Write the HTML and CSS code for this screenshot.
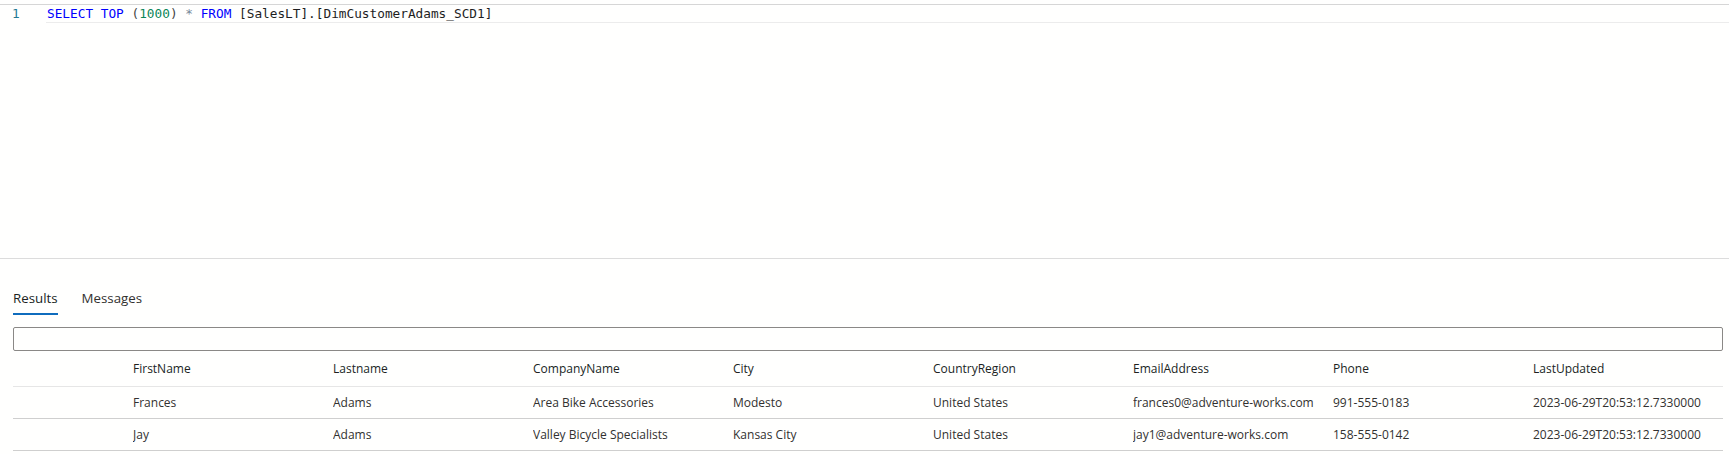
FILE: index.html
```html
<!DOCTYPE html>
<html lang="en">
<head>
<meta charset="utf-8">
<title>Query</title>
<link rel="stylesheet" href="styles.css">
</head>
<body>
<div class="editor">
  <div class="editor-inner">
    <div class="code-line">
      <div class="gutter">1</div>
      <div class="line-content"><span class="kw">SELECT</span> <span class="kw">TOP</span> <span class="delim">(</span><span class="num">1000</span><span class="delim">)</span> <span class="op">*</span> <span class="kw">FROM</span> <span class="ident">[SalesLT].[DimCustomerAdams_SCD1]</span></div>
    </div>
  </div>
</div>
<div class="results">
  <div class="tabs">
    <div class="tab active">Results</div>
    <div class="tab">Messages</div>
  </div>
  <div class="filter"></div>
  <div class="grid">
    <div class="row header">
      <div class="cell"></div>
      <div class="cell">FirstName</div>
      <div class="cell">Lastname</div>
      <div class="cell">CompanyName</div>
      <div class="cell">City</div>
      <div class="cell">CountryRegion</div>
      <div class="cell">EmailAddress</div>
      <div class="cell">Phone</div>
      <div class="cell">LastUpdated</div>
    </div>
    <div class="row">
      <div class="cell"></div>
      <div class="cell">Frances</div>
      <div class="cell">Adams</div>
      <div class="cell">Area Bike Accessories</div>
      <div class="cell">Modesto</div>
      <div class="cell">United States</div>
      <div class="cell">frances0@adventure-works.com</div>
      <div class="cell">991-555-0183</div>
      <div class="cell">2023-06-29T20:53:12.7330000</div>
    </div>
    <div class="row">
      <div class="cell"></div>
      <div class="cell">Jay</div>
      <div class="cell">Adams</div>
      <div class="cell">Valley Bicycle Specialists</div>
      <div class="cell">Kansas City</div>
      <div class="cell">United States</div>
      <div class="cell">jay1@adventure-works.com</div>
      <div class="cell">158-555-0142</div>
      <div class="cell">2023-06-29T20:53:12.7330000</div>
    </div>
  </div>
</div>
</body>
</html>
```

FILE: styles.css
```css
* { box-sizing: border-box; }
html, body {
  margin: 0;
  padding: 0;
  background: #fffffe;
}
body {
  font-family: "Open Sans", "Noto Sans", sans-serif;
  color: #323130;
  width: 1729px;
  height: 454px;
  overflow: hidden;
}
.editor {
  height: 259px;
  padding-top: 4px;
  border-bottom: 1px solid #dcdcdc;
}
.editor-inner {
  border-top: 1px solid #d6d6d6;
}
.code-line {
  display: flex;
  height: 18px;
  font-family: "DejaVu Sans Mono", "Liberation Mono", monospace;
  font-size: 12.75px;
  line-height: 17px;
}
.gutter {
  width: 46px;
  padding-left: 12px;
  color: #237893;
}
.line-content {
  flex: 1;
  padding-left: 1px;
  border-bottom: 1px solid #ececec;
  white-space: pre;
  color: #000000;
}
.kw { color: #0000ff; }
.num { color: #098658; }
.delim { color: #444444; }
.op { color: #778899; }
.ident { color: #1e1e1e; }

.results {
  padding: 29px 6px 0 13px;
}
.tabs {
  display: flex;
  gap: 24px;
}
.tab {
  font-size: 13.3px;
  line-height: 20px;
  padding-bottom: 5px;
  border-bottom: 2px solid transparent;
  color: #323130;
}
.tab.active {
  color: #201f1e;
  border-bottom-color: #0f6cbd;
}
.filter {
  margin-top: 12px;
  height: 24px;
  border: 1px solid #8a8886;
  border-radius: 2px;
}
.grid {
  font-size: 12px;
}
.row {
  display: grid;
  grid-template-columns: 120px repeat(7, 200px) 1fr;
  height: 32px;
  align-items: center;
  border-bottom: 1px solid #cfcfcf;
}
.row.header {
  height: 36px;
  border-bottom-color: #e6e6e6;
  color: #201f1e;
}
.cell {
  white-space: nowrap;
  overflow: hidden;
}
```
